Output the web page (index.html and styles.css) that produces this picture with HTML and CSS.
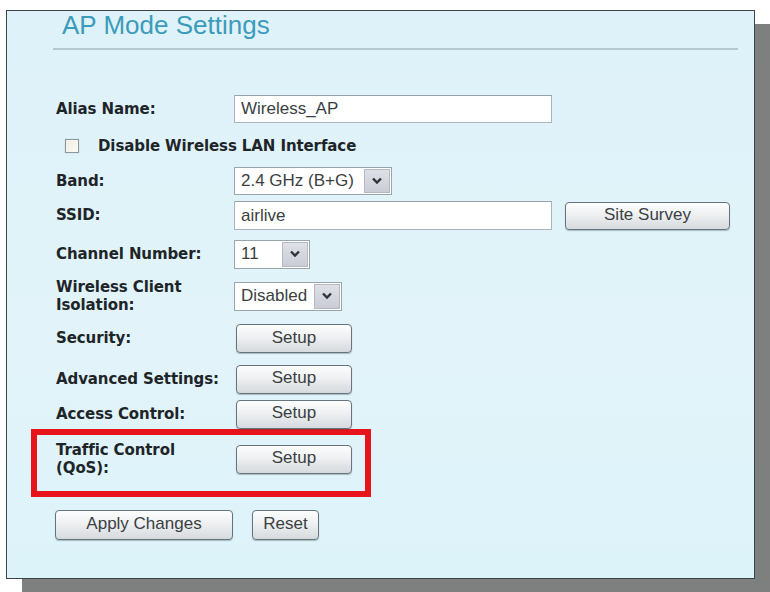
FILE: index.html
```html
<!DOCTYPE html>
<html>
<head>
<meta charset="utf-8">
<title>AP Mode Settings</title>
<link rel="stylesheet" href="styles.css">
</head>
<body>
<div class="panel">
  <h1 class="title">AP Mode Settings</h1>
  <div class="rule"></div>
  <div class="form">
    <div class="row h-alias">
      <span class="label">Alias Name:</span>
      <span class="field w-wide">Wireless_AP</span>
    </div>
    <div class="row h-disable">
      <span class="check"></span>
      <span class="label-inline">Disable Wireless LAN Interface</span>
    </div>
    <div class="row h-band">
      <span class="label">Band:</span>
      <span class="select w-band"><span class="sel-text">2.4 GHz (B+G)</span><span class="arrow"><svg width="12" height="8" viewBox="0 0 12 8"><path d="M2 1.5 L6 5.5 L10 1.5" fill="none" stroke="#2d3338" stroke-width="2.4"/></svg></span></span>
    </div>
    <div class="row h-ssid">
      <span class="label">SSID:</span>
      <span class="field w-wide tall">airlive</span>
      <span class="btn w-survey">Site Survey</span>
    </div>
    <div class="row h-channel">
      <span class="label">Channel Number:</span>
      <span class="select w-channel tall"><span class="sel-text">11</span><span class="arrow"><svg width="12" height="8" viewBox="0 0 12 8"><path d="M2 1.5 L6 5.5 L10 1.5" fill="none" stroke="#2d3338" stroke-width="2.4"/></svg></span></span>
    </div>
    <div class="row h-iso">
      <span class="label two">Wireless Client<br>Isolation:</span>
      <span class="select w-iso tall"><span class="sel-text">Disabled</span><span class="arrow"><svg width="12" height="8" viewBox="0 0 12 8"><path d="M2 1.5 L6 5.5 L10 1.5" fill="none" stroke="#2d3338" stroke-width="2.4"/></svg></span></span>
    </div>
    <div class="row h-security">
      <span class="label">Security:</span>
      <span class="btn w-setup">Setup</span>
    </div>
    <div class="row h-adv">
      <span class="label">Advanced Settings:</span>
      <span class="btn w-setup">Setup</span>
    </div>
    <div class="row h-access">
      <span class="label">Access Control:</span>
      <span class="btn w-setup">Setup</span>
    </div>
    <div class="highlight">
      <div class="row h-qos">
        <span class="label two">Traffic Control<br>(QoS):</span>
        <span class="btn w-setup">Setup</span>
      </div>
    </div>
    <div class="actions">
      <span class="btn w-apply">Apply Changes</span>
      <span class="btn w-reset">Reset</span>
    </div>
  </div>
</div>
</body>
</html>
```
FILE: styles.css
```css
html, body {
  margin: 0;
  padding: 0;
  background: #ffffff;
}
body {
  width: 770px;
  height: 592px;
  overflow: hidden;
}
.panel {
  box-sizing: border-box;
  margin: 10px 0 0 6px;
  width: 749px;
  height: 569px;
  border: 1px solid #3e4446;
  background: linear-gradient(180deg, #def2f9 0%, #e2f4fa 60%, #ddf3fa 100%);
  box-shadow: 16px 14px 0 #7e8080;
}
.title {
  margin: 0 0 0 55px;
  font-family: "Liberation Sans", Arial, sans-serif;
  font-weight: normal;
  font-size: 26px;
  line-height: 28px;
  color: #3c9bba;
}
.rule {
  margin: 9px 0 0 46px;
  width: 685px;
  height: 2px;
  background: #b3c9d0;
}
.form {
  padding: 42px 0 0 49px;
}
.row {
  display: flex;
  align-items: center;
}
.label, .label-inline {
  font-family: "DejaVu Sans", Verdana, sans-serif;
  font-weight: bold;
  font-size: 15px;
  color: #1e2528;
  letter-spacing: -0.1px;
}
.label {
  width: 178px;
  flex: none;
  line-height: 19px;
}
.label.two {
  line-height: 18px;
}
.h-alias { height: 34px; }
.h-disable { height: 39px; }
.h-band { height: 32px; }
.h-ssid { height: 37px; }
.h-channel { height: 40px; }
.h-iso { height: 44px; }
.h-security { height: 41px; }
.h-adv { height: 40px; }
.h-access { height: 30px; }
.h-qos { height: 44px; }

.check {
  box-sizing: border-box;
  width: 14px;
  height: 14px;
  margin-left: 9px;
  margin-right: 19px;
  border: 1px solid #8c9a9f;
  background: linear-gradient(135deg, #f3ede2, #fbfaf6);
  box-shadow: 0 0 1px #b0bcc0;
}
.field, .select, .btn {
  box-sizing: border-box;
  font-family: "Liberation Sans", Arial, sans-serif;
  font-size: 17px;
  color: #3b3f42;
  flex: none;
}
.field {
  display: flex;
  align-items: center;
  height: 28px;
  padding-left: 6px;
  background: #ffffff;
  border: 1px solid #a9b5ba;
  border-top-color: #97a3a8;
}
.field.tall { height: 29px; }
.w-wide { width: 318px; }
.select {
  display: flex;
  align-items: stretch;
  height: 28px;
  background: #ffffff;
  border: 1px solid #98a6ab;
}
.select.tall { height: 29px; }
.sel-text {
  flex: 1;
  display: flex;
  align-items: center;
  padding-left: 6px;
}
.arrow {
  width: 24px;
  margin: 1px;
  display: flex;
  align-items: center;
  justify-content: center;
  background: linear-gradient(180deg, #dfe1e8, #c9ccd5);
  border: 1px solid #b4b9c2;
}
.w-band { width: 158px; }
.w-channel { width: 76px; }
.w-iso { width: 108px; }
.btn {
  display: flex;
  align-items: center;
  justify-content: center;
  height: 29px;
  border: 1px solid #66757c;
  border-radius: 4px;
  background: linear-gradient(180deg, #fdfdfd 0%, #eef0f2 45%, #d6dade 100%);
  box-shadow: 0 1px 1px rgba(60, 80, 90, 0.35);
  padding-bottom: 2px;
}
.w-survey {
  width: 165px;
  height: 28px;
  margin-left: 13px;
}
.w-setup {
  width: 116px;
  margin-left: 2px;
}
.highlight {
  box-sizing: border-box;
  width: 340px;
  height: 68px;
  margin-left: -25px;
  padding: 2px 0 0 19px;
  border: 6px solid #e8141c;
}
.actions {
  display: flex;
  gap: 19px;
  margin: 13px 0 0 -1px;
}
.w-apply {
  width: 178px;
  height: 30px;
}
.w-reset {
  width: 67px;
  height: 30px;
}
```
